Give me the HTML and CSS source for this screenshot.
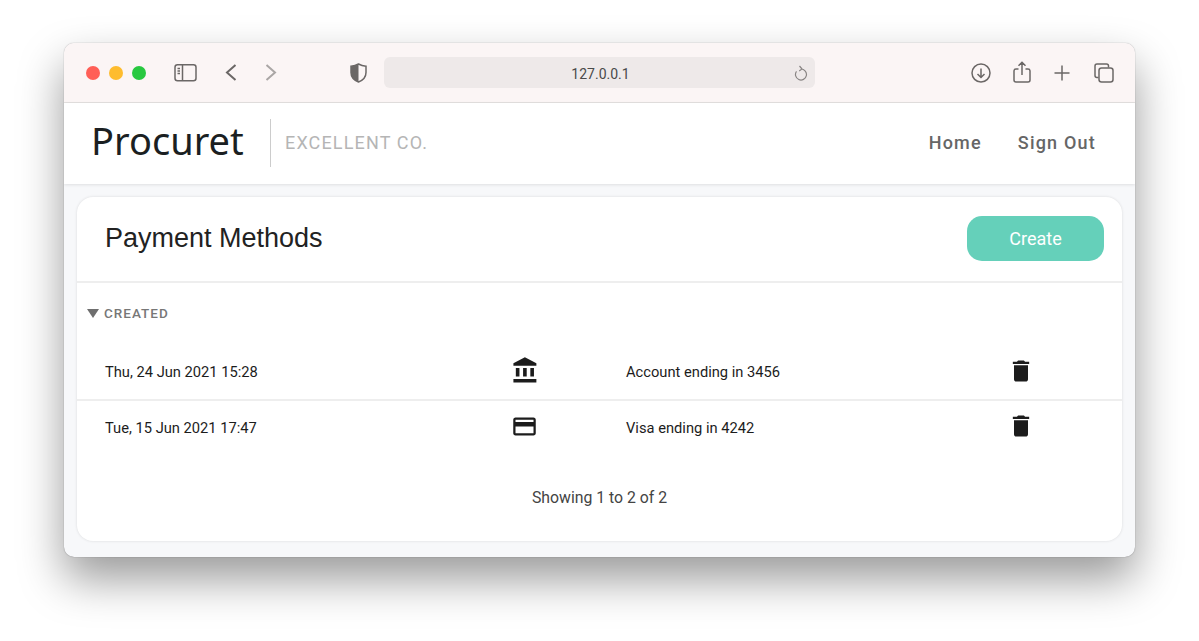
FILE: index.html
```html
<!DOCTYPE html>
<html lang="en">
<head>
    <meta charset="UTF-8">
    <title>Payment Methods</title>
    <link rel="stylesheet" href="styles.css">
</head>
<body>

<div class="window">

    <div class="toolbar">
        <div class="lights">
            <span class="light red"></span>
            <span class="light yellow"></span>
            <span class="light green"></span>
        </div>
        <svg class="tool sidebar-btn" width="23" height="18" viewBox="0 0 23 18">
            <rect x="1" y="0.75" width="21" height="16" rx="2.5"/>
            <path d="M8.5 1v15.500M3.5 4.500h2.500M3.5 7h2.500M3.500 9.500h2.500"/>
        </svg>
        <svg class="tool back-btn" width="12" height="18" viewBox="0 0 12 18">
            <path d="M10.500 1 2 8.500l8.500 7.500"/>
        </svg>
        <svg class="tool forward-btn" width="12" height="18" viewBox="0 0 12 18">
            <path d="M1.500 1 10 8.500 1.500 16"/>
        </svg>
        <svg class="tool shield-btn" width="17" height="20" viewBox="0 0 17 20">
            <path d="M8.500 1C6 2.400 3.500 3 1 3.200v6.300c0 4.500 3 7.700 7.500 9.500 4.500-1.800 7.500-5 7.500-9.500V3.200C13.500 3 11 2.400 8.500 1z"/>
            <path class="fill" d="M8.500 1C6 2.400 3.500 3 1 3.200v6.300c0 4.500 3 7.700 7.500 9.500z"/>
        </svg>
        <div class="address">
            <span class="url">127.0.0.1</span>
            <svg class="tool reload" width="14" height="16" viewBox="0 0 14 16">
                <path d="M2.500 6.300A5.500 5.500 0 1 0 7 4M5.500 1 8 4 5.200 6"/>
            </svg>
        </div>
        <div class="tool-group">
            <svg class="tool" width="20" height="20" viewBox="0 0 20 20">
                <circle cx="10" cy="10" r="9"/>
                <path d="M10 5.500v9M6.500 11l3.500 3.500 3.500-3.500"/>
            </svg>
            <svg class="tool share-btn" width="18" height="22" viewBox="0 0 18 22">
                <path d="M5.500 8H3a2 2 0 0 0-2 1.800V19a2 2 0 0 0 2 2h12a2 2 0 0 0 2-2V9.800A2 2 0 0 0 15 8h-2.500M9 14V1.500M5.500 4.800 9 1.300l3.500 3.500"/>
            </svg>
            <svg class="tool plus-btn" width="16" height="16" viewBox="0 0 16 16">
                <path d="M8 .5v15M.5 8h15"/>
            </svg>
            <svg class="tool" width="20" height="20" viewBox="0 0 20 20">
                <path d="M4.500 14.500H3a2 2 0 0 1-2-2V3a2 2 0 0 1 2-2h9.500a2 2 0 0 1 2 2v1.500"/>
                <rect x="5" y="5" width="14" height="14" rx="2.500"/>
            </svg>
        </div>
    </div>

    <div class="header">
        <div class="logo">Procuret</div>
        <div class="company">EXCELLENT CO.</div>
        <div class="nav">
            <a class="nav-link">Home</a>
            <a class="nav-link">Sign Out</a>
        </div>
    </div>

    <div class="content">
        <div class="card">
            <div class="card-head">
                <h1 class="title">Payment Methods</h1>
                <button class="create-btn">Create</button>
            </div>

            <div class="sort-head">
                <span class="sort-arrow"></span>
                <span class="sort-label">CREATED</span>
            </div>

            <div class="row first">
                <span class="cell">Thu, 24 Jun 2021 15:28</span>
                <svg class="icon bank" viewBox="0 0 24 24">
                    <path d="M4 10v7h3v-7H4zm6 0v7h3v-7h-3zM2 22h19v-3H2v3zm14-12v7h3v-7h-3zm-4.500-9L2 6v2h19V6l-9.500-5z"/>
                </svg>
                <span class="cell">Account ending in 3456</span>
                <svg class="icon trash" viewBox="0 0 24 24">
                    <path d="M6 19c0 1.100.9 2 2 2h8c1.100 0 2-.9 2-2V7H6v12zM19 4h-3.500l-1-1h-5l-1 1H5v2h14V4z"/>
                </svg>
            </div>
            <div class="row second">
                <span class="cell">Tue, 15 Jun 2021 17:47</span>
                <svg class="icon card-icon" viewBox="0 0 24 24">
                    <path d="M20 4H4c-1.110 0-1.990.89-1.990 2L2 18c0 1.110.89 2 2 2h16c1.110 0 2-.89 2-2V6c0-1.110-.89-2-2-2zm0 14H4v-6h16v6zm0-10H4V6h16v2z"/>
                </svg>
                <span class="cell">Visa ending in 4242</span>
                <svg class="icon trash" viewBox="0 0 24 24">
                    <path d="M6 19c0 1.100.9 2 2 2h8c1.100 0 2-.9 2-2V7H6v12zM19 4h-3.500l-1-1h-5l-1 1H5v2h14V4z"/>
                </svg>
            </div>

            <div class="showing">Showing 1 to 2 of 2</div>
        </div>
    </div>
</div>

</body>
</html>
```

FILE: styles.css
```css
body {
    margin: 0;
    height: 641px;
    padding: 43px 0 0 64px;
    box-sizing: border-box;
    overflow: hidden;
    background: #fff;
    font-family: Roboto, sans-serif;
    color: #1c1c1c;
}

.window {
    width: 1071px;
    height: 514px;
    border-radius: 10px;
    overflow: hidden;
    background: #f7f8fa;
    display: flex;
    flex-direction: column;
    box-shadow: 0 22px 45px rgba(0, 0, 0, 0.4), 0 0 1px rgba(0, 0, 0, 0.5);
}

.toolbar {
    height: 59px;
    flex: none;
    display: flex;
    align-items: center;
    padding-left: 22px;
    background: #fbf5f5;
    border-bottom: 1px solid #e3e0df;
}

.lights {
    display: flex;
    gap: 9px;
}

.light {
    width: 14px;
    height: 14px;
    border-radius: 50%;
}

.red { background: #ff5f57; }
.yellow { background: #febc2e; }
.green { background: #28c840; }

.tool {
    flex: none;
    fill: none;
    stroke: #6b6766;
    stroke-width: 1.5;
}

.sidebar-btn { margin-left: 28px; }
.back-btn { margin-left: 28px; stroke-width: 2; }
.forward-btn { margin-left: 28px; stroke: #aaa6a5; stroke-width: 2; }
.shield-btn { margin-left: 73px; }
.shield-btn .fill { fill: #6b6766; stroke: none; }

.address {
    width: 431px;
    height: 31px;
    margin-left: 17px;
    border-radius: 6px;
    background: #eee9e9;
    display: flex;
    align-items: center;
    justify-content: center;
    position: relative;
    font-size: 14px;
    color: #4a4a4a;
}

.url {
    padding: 2px 0 0 2px;
}

.reload {
    position: absolute;
    right: 7px;
    top: 8px;
    stroke: #8a8685;
    stroke-width: 1.2;
}

.tool-group {
    display: flex;
    align-items: center;
    gap: 22px;
    margin-left: 156px;
}

.share-btn {
    margin-bottom: 2px;
}

.plus-btn {
    margin: 0 2px 0 1px;
}

.header {
    height: 80px;
    flex: none;
    display: flex;
    align-items: center;
    padding: 0 39px 1px 28px;
    background: #fff;
    box-shadow: 0 1px 3px rgba(0, 0, 0, 0.1);
}

.logo {
    font-family: "Noto Sans", sans-serif;
    font-size: 38px;
    color: #1b1f22;
    width: 179px;
    height: 48px;
    line-height: 42px;
    margin-left: -1px;
    border-right: 1px solid #ccc;
}

.company {
    margin: 0 0 2px 14px;
    font-size: 18px;
    letter-spacing: 1.15px;
    color: #b5b5b5;
}

.nav {
    margin: 0 0 2px auto;
    display: flex;
    gap: 36px;
}

.nav-link {
    font-size: 18px;
    font-weight: 500;
    letter-spacing: 1.2px;
    color: #666;
}

.content {
    flex: 1;
    padding: 13px 13px 16px;
    display: flex;
}

.card {
    flex: 1;
    background: #fff;
    border-radius: 16px;
    box-shadow: 0 0 3px rgba(0, 0, 0, 0.12);
}

.card-head {
    height: 82px;
    display: flex;
    align-items: center;
    justify-content: space-between;
    padding: 0 18px 2px 28px;
    border-bottom: 2px solid #eee;
}

.title {
    margin: 0;
    font-family: "Liberation Sans", sans-serif;
    font-size: 27px;
    font-weight: 400;
    color: #222;
}

.create-btn {
    width: 137px;
    height: 45px;
    border: none;
    border-radius: 15px;
    background: #65d0ba;
    color: #fff;
    font-family: Roboto, sans-serif;
    font-size: 18px;
}

.sort-head {
    display: flex;
    align-items: center;
    gap: 5px;
    padding: 22px 0 0 10px;
    height: 16px;
}

.sort-arrow {
    border-left: 6.5px solid transparent;
    border-right: 6.5px solid transparent;
    border-top: 9px solid #6e6e6e;
}

.sort-label {
    font-size: 13.5px;
    font-weight: 500;
    letter-spacing: 1px;
    color: #777;
}

.row {
    display: grid;
    grid-template-columns: 407px 114px 386px auto;
    align-items: center;
    padding-left: 28px;
    font-size: 14.7px;
    color: #1c1c1c;
}

.row.first {
    height: 55px;
    margin-top: 22px;
    padding-bottom: 1px;
    border-bottom: 2px solid #eee;
}

.row.second {
    height: 50px;
}

.cell {
    padding-top: 2px;
}

.second .cell {
    padding-top: 3px;
}

.icon {
    fill: #1c1c1c;
    display: block;
}

.bank { width: 29px; height: 29px; margin-left: -1.5px; }
.card-icon { width: 27px; height: 27px; margin-left: -1.5px; }
.trash { width: 28px; height: 28px; margin-left: -5px; }

.showing {
    margin-top: 37px;
    text-align: center;
    font-size: 15.8px;
    color: #444;
}
```
